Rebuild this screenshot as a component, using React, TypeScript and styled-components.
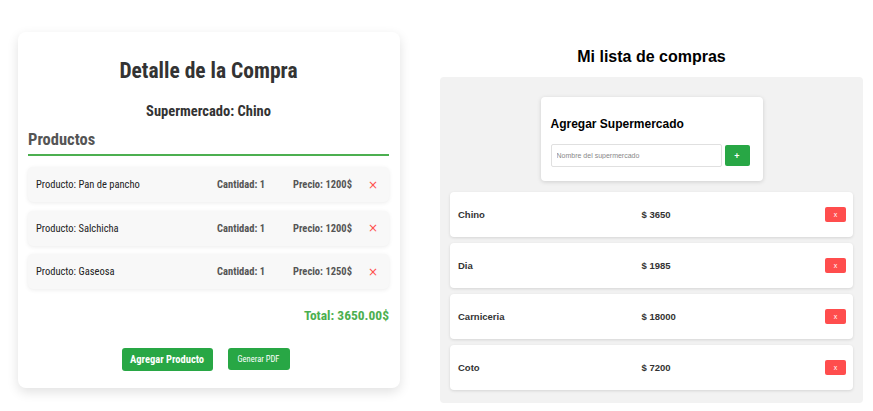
import React from "react";
import styled, { createGlobalStyle } from "styled-components";

const GlobalStyle = createGlobalStyle`
  html, body { margin: 0; padding: 0; background: #fff; }
  body { font-family: "Liberation Sans", Arial, sans-serif; }
  * { box-sizing: border-box; }
`;

const Page = styled.div`
  display: flex;
  align-items: flex-start;
  width: 873px;
  height: 411px;
  padding: 32px 10px 0 18px;
  gap: 40px;
`;

const DetailCard = styled.div`
  width: 382px;
  height: 356px;
  background: #fff;
  border-radius: 8px;
  box-shadow: 0 4px 12px rgba(0, 0, 0, 0.12);
  padding: 26px 11px 17px 10px;
  display: flex;
  flex-direction: column;
  font-family: "Roboto Condensed", Roboto, "Liberation Sans", sans-serif;
  font-stretch: condensed;
`;

const Title = styled.h1`
  margin: 0;
  font-size: 21.5px;
  line-height: 26px;
  font-weight: 700;
  text-align: center;
  color: #333;
`;

const Subtitle = styled.h3`
  margin: 20px 0 0;
  font-size: 14.5px;
  line-height: 16px;
  font-weight: 700;
  text-align: center;
  color: #333;
`;

const SectionHeading = styled.h2`
  margin: 10px 0 0;
  padding-bottom: 4px;
  font-size: 16.5px;
  line-height: 20px;
  font-weight: 700;
  color: #555;
  border-bottom: 2px solid #4caf50;
`;

const ProductList = styled.div`
  margin-top: 11px;
  display: flex;
  flex-direction: column;
  gap: 8.5px;
`;

const ProductRow = styled.div`
  height: 35px;
  display: flex;
  align-items: center;
  padding: 0 11px 0 8px;
  background: #f8f8f8;
  border-radius: 5px;
  box-shadow: 0 1px 4px rgba(0, 0, 0, 0.08);
  font-size: 10.5px;
`;

const ProductName = styled.span`
  flex: 1;
  color: #222;
`;

const ProductInfo = styled.span<{ $gap: number }>`
  font-weight: 700;
  color: #555;
  margin-right: ${(p) => p.$gap}px;
`;

const RemoveX = styled.button`
  border: none;
  background: none;
  padding: 0;
  color: #ff4d4d;
  font-size: 12px;
  line-height: 1;
  font-family: "DejaVu Sans", sans-serif;
  cursor: pointer;
`;

const Total = styled.div`
  margin-top: 17px;
  text-align: right;
  font-size: 13.5px;
  line-height: 18px;
  font-weight: 700;
  color: #4caf50;
`;

const Actions = styled.div`
  margin-top: auto;
  display: flex;
  justify-content: center;
  align-items: flex-start;
  gap: 15px;
  padding-right: 6px;
`;

const GreenButton = styled.button<{ $small?: boolean }>`
  border: none;
  border-radius: 3px;
  background: #28a745;
  color: #fff;
  font-family: inherit;
  font-stretch: condensed;
  font-weight: ${(p) => (p.$small ? 400 : 700)};
  font-size: ${(p) => (p.$small ? "8.5px" : "10.5px")};
  height: ${(p) => (p.$small ? "22px" : "23px")};
  width: ${(p) => (p.$small ? "62px" : "91px")};
  padding: 0;
  white-space: nowrap;
  cursor: pointer;
`;

const ListColumn = styled.div`
  width: 423px;
  display: flex;
  flex-direction: column;
`;

const ListTitle = styled.h2`
  margin: 15px 0 0;
  font-size: 16px;
  line-height: 20px;
  font-weight: 700;
  text-align: center;
  color: #000;
`;

const GrayPanel = styled.div`
  margin-top: 10px;
  height: 326px;
  background: #f2f2f2;
  border-radius: 4px;
  padding: 20px 10px 14px;
  display: flex;
  flex-direction: column;
  align-items: center;
`;

const AddCard = styled.div`
  width: 222px;
  background: #fff;
  border-radius: 4px;
  box-shadow: 0 1px 4px rgba(0, 0, 0, 0.15);
  padding: 19px 12px 14px 10px;
`;

const AddTitle = styled.h3`
  margin: 0;
  font-size: 12px;
  line-height: 16px;
  font-weight: 700;
  color: #000;
`;

const AddForm = styled.div`
  margin-top: 12px;
  display: flex;
  align-items: center;
  gap: 3px;
`;

const NameInput = styled.input`
  width: 171px;
  height: 23px;
  border: 1px solid #e0e0e0;
  border-radius: 2px;
  padding: 0 5px;
  font-size: 7px;
  font-family: "Liberation Sans", Arial, sans-serif;
  outline: none;
  &::placeholder { color: #888; }
`;

const PlusButton = styled.button`
  width: 25px;
  height: 21px;
  border: none;
  border-radius: 2px;
  background: #28a745;
  color: #fff;
  font-weight: 700;
  font-size: 9px;
  padding: 0;
  font-family: "Liberation Sans", Arial, sans-serif;
`;

const StoreList = styled.div`
  margin-top: 11px;
  width: 100%;
  display: flex;
  flex-direction: column;
  gap: 6px;
`;

const StoreRow = styled.div`
  height: 45px;
  background: #fff;
  border-radius: 4px;
  box-shadow: 0 1px 3px rgba(0, 0, 0, 0.12);
  display: flex;
  align-items: center;
  padding: 0 7px 0 8px;
  font-size: 9.5px;
  font-weight: 700;
  color: #333;
`;

const StoreCell = styled.span`
  flex: 1;
`;

const DeleteButton = styled.button`
  width: 21px;
  height: 15px;
  border: none;
  border-radius: 2px;
  background: #ff4d4d;
  color: #fff;
  font-size: 7px;
  padding: 0;
  font-family: "Liberation Sans", Arial, sans-serif;
`;

const products = [
  { name: "Pan de pancho", qty: 1, price: 1200 },
  { name: "Salchicha", qty: 1, price: 1200 },
  { name: "Gaseosa", qty: 1, price: 1250 },
];

const stores = [
  { name: "Chino", total: 3650 },
  { name: "Dia", total: 1985 },
  { name: "Carniceria", total: 18000 },
  { name: "Coto", total: 7200 },
];

export default function App() {
  return (
    <>
      <GlobalStyle />
      <Page>
        <DetailCard>
          <Title>Detalle de la Compra</Title>
          <Subtitle>Supermercado: Chino</Subtitle>
          <SectionHeading>Productos</SectionHeading>
          <ProductList>
            {products.map((p) => (
              <ProductRow key={p.name}>
                <ProductName>Producto: {p.name}</ProductName>
                <ProductInfo $gap={28}>Cantidad: {p.qty}</ProductInfo>
                <ProductInfo $gap={16}>Precio: {p.price}$</ProductInfo>
                <RemoveX>×</RemoveX>
              </ProductRow>
            ))}
          </ProductList>
          <Total>Total: 3650.00$</Total>
          <Actions>
            <GreenButton>Agregar Producto</GreenButton>
            <GreenButton $small>Generar PDF</GreenButton>
          </Actions>
        </DetailCard>
        <ListColumn>
          <ListTitle>Mi lista de compras</ListTitle>
          <GrayPanel>
            <AddCard>
              <AddTitle>Agregar Supermercado</AddTitle>
              <AddForm>
                <NameInput placeholder="Nombre del supermercado" />
                <PlusButton>+</PlusButton>
              </AddForm>
            </AddCard>
            <StoreList>
              {stores.map((s) => (
                <StoreRow key={s.name}>
                  <StoreCell>{s.name}</StoreCell>
                  <StoreCell>$ {s.total}</StoreCell>
                  <DeleteButton>x</DeleteButton>
                </StoreRow>
              ))}
            </StoreList>
          </GrayPanel>
        </ListColumn>
      </Page>
    </>
  );
}
